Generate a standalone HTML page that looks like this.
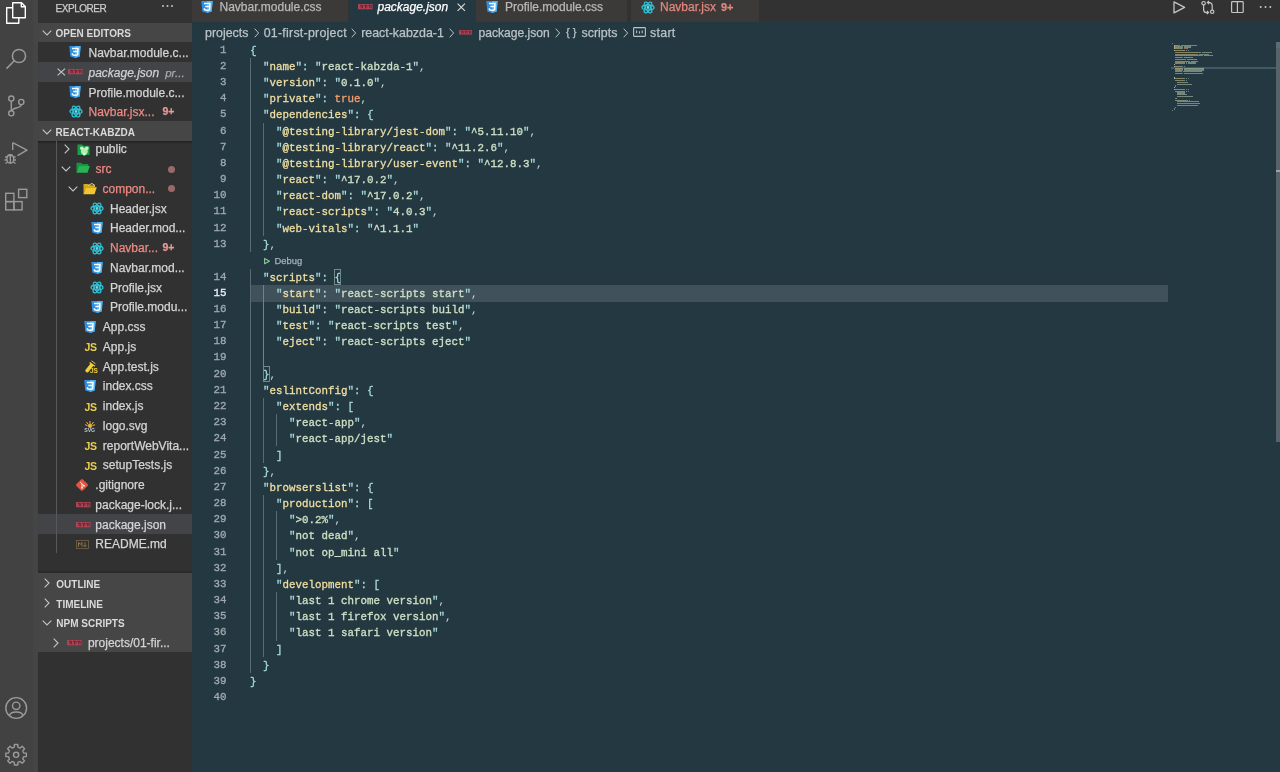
<!DOCTYPE html><html><head><meta charset="utf-8"><style>
*{box-sizing:border-box;margin:0;padding:0}
html,body{width:1280px;height:772px;overflow:hidden;background:#243842;font-family:"Liberation Sans",sans-serif}
div,span.a,svg{position:absolute}
svg{overflow:visible}
.t{white-space:pre;font-size:12px;line-height:14px;color:#d4d4d4;-webkit-text-stroke:0.25px currentColor}
.h{white-space:pre;font-size:10px;font-weight:bold;line-height:12px;color:#dadada}
.red{color:#ec8a84}
.ln{width:40px;text-align:right;left:186.5px;font-family:"Liberation Mono",monospace;font-size:10.833px;color:#a0aaae;line-height:16.18px;white-space:pre;-webkit-text-stroke:0.3px currentColor;transform:scaleY(1.08)}
.l{left:250px;line-height:16.18px;font-family:"Liberation Mono",monospace;font-size:10.833px;white-space:pre;color:#cfd8dc;transform:translateY(0.4px) scaleY(1.07)}
.l span{-webkit-text-stroke:0.3px currentColor}
.k{color:#efdea2}
.q{color:#a6d9dc}
.s{color:#cde0c4}
.b{color:#f4a06d}
.g{width:1px;background:#3d4e57}
</style></head><body><div id="root" style="left:0;top:0;width:1280px;height:772px;overflow:hidden;will-change:transform">
<div style="left:0px;top:0px;width:33px;height:772px;background:#424242;"></div>
<div style="left:32.8px;top:0px;width:4.8px;height:772px;background:#454545;"></div>
<div style="left:37.6px;top:0px;width:1px;height:772px;background:#2f2f2f;"></div>
<div style="left:38px;top:0px;width:153.5px;height:772px;background:#313131;"></div>
<div style="left:38px;top:0px;width:153.5px;height:22.3px;background:#333333;"></div>
<div style="left:191.5px;top:0px;width:1088.5px;height:22px;background:#323232;"></div>
<svg style="left:0px;top:0px" width="36" height="30" viewBox="0 0 36 30"><g fill="none" stroke="#ffffff" stroke-width="1.4" stroke-linejoin="round">
<path d="M12.7 2.7 H21.5 L25.3 6.5 V17.8 H12.7 Z"/><path d="M21.3 2.7 V6.7 H25.3"/>
<path d="M12.7 7.8 H6.7 V23.3 H18.8 V17.8"/></g></svg>
<svg style="left:0px;top:40px" width="36" height="32" viewBox="0 0 36 32"><g fill="none" stroke="#9a9a9a" stroke-width="1.5"><circle cx="19" cy="16" r="6.6"/><path d="M14.3 20.7 L6.5 28.6"/></g></svg>
<svg style="left:0px;top:90px" width="36" height="30" viewBox="0 0 36 30"><g fill="none" stroke="#9a9a9a" stroke-width="1.4"><circle cx="11.3" cy="8.6" r="2.6"/><circle cx="11.3" cy="23.3" r="2.6"/><circle cx="21.3" cy="12" r="2.6"/><path d="M11.3 11.2 V20.7"/><path d="M21.3 14.6 C21.3 19 12.5 17 11.8 20.8"/></g></svg>
<svg style="left:0px;top:138px" width="36" height="30" viewBox="0 0 36 30"><g fill="none" stroke="#9a9a9a" stroke-width="1.4" stroke-linejoin="round"><path d="M12.7 4.7 L27 12.2 L17.5 17.7"/><path d="M12.7 4.7 V12"/>
<ellipse cx="10.3" cy="21" rx="3.4" ry="4.2"/><path d="M7.5 17.5 H13 M5 19 H7 M13.6 19 H15.6 M4.5 22 H7 M13.6 22 H16 M5.5 25.5 L7.5 24 M15.5 25.5 L13.3 24 M10.3 17 V25"/></g></svg>
<svg style="left:0px;top:185px" width="36" height="30" viewBox="0 0 36 30"><g fill="none" stroke="#9a9a9a" stroke-width="1.4"><rect x="5.7" y="8.3" width="8.2" height="8.3"/><rect x="5.7" y="16.6" width="8.2" height="8.3"/><rect x="13.9" y="16.6" width="8.2" height="8.3"/><rect x="18.6" y="4.3" width="8.2" height="8.3"/></g></svg>
<svg style="left:0px;top:694px" width="36" height="28" viewBox="0 0 36 28"><g fill="none" stroke="#9a9a9a" stroke-width="1.4"><circle cx="16.2" cy="14" r="10.4"/><circle cx="16.2" cy="11.8" r="3.7"/><path d="M9.4 21.8 C10.5 16.8 21.9 16.8 23 21.8"/></g></svg>
<svg style="left:0px;top:740px" width="36" height="30" viewBox="0 0 36 30"><g fill="none" stroke="#9a9a9a" stroke-width="1.4" stroke-linejoin="round"><polygon points="13.29,7.63 14.26,7.12 14.39,4.54 17.81,4.54 17.94,7.12 18.91,7.63 19.19,7.75 20.23,8.06 22.15,6.34 24.56,8.75 22.84,10.67 23.15,11.71 23.27,11.99 23.78,12.96 26.36,13.09 26.36,16.51 23.78,16.64 23.27,17.61 23.15,17.89 22.84,18.93 24.56,20.85 22.15,23.26 20.23,21.54 19.19,21.85 18.91,21.97 17.94,22.48 17.81,25.06 14.39,25.06 14.26,22.48 13.29,21.97 13.01,21.85 11.97,21.54 10.05,23.26 7.64,20.85 9.36,18.93 9.05,17.89 8.93,17.61 8.42,16.64 5.84,16.51 5.84,13.09 8.42,12.96 8.93,11.99 9.05,11.71 9.36,10.67 7.64,8.75 10.05,6.34 11.97,8.06 13.01,7.75"/><circle cx="16.1" cy="14.8" r="2.6"/></g></svg>
<div class="t" style="left:55.5px;top:1.60px;font-size:10px;color:#cccccc;letter-spacing:-0.45px">EXPLORER</div>
<svg style="left:161px;top:3px" width="14" height="6" viewBox="0 0 14 6"><g fill="#c5c5c5"><circle cx="2" cy="3" r="1"/><circle cx="6.5" cy="3" r="1"/><circle cx="11" cy="3" r="1"/></g></svg>
<div style="left:38px;top:22.5px;width:153.5px;height:19.8px;background:#464646;"></div>
<svg style="left:42px;top:29.7px" width="10" height="6" viewBox="0 0 10 6"><path d="M0.7 0.7 L5 5 L9.3 0.7" fill="none" stroke="#c5c5c5" stroke-width="1.1"/></svg>
<div class="h" style="left:55.5px;top:27.80px;">OPEN EDITORS</div>
<div style="left:38px;top:62.25px;width:153.5px;height:20px;background:#434448;"></div>
<svg style="left:69.2px;top:45.900000000000006px" width="12" height="12" viewBox="0 0 12 12"><path d="M0.3 0 H11.7 L10.7 10.4 L6 12 L1.3 10.4 Z" fill="#2e8ee0"/><path d="M6 0 H11.7 L10.7 10.4 L6 12 Z" fill="#4db2f2"/><path d="M3 2.6 H9 L8.6 8.6 L6 9.5 L3.5 8.7 L3.4 7.3 M4.3 5.6 H8.8" fill="none" stroke="#ffffff" stroke-width="1.5"/></svg>
<div class="t" style="left:88.5px;top:46.40px;">Navbar.module.c...</div>
<svg style="left:56.5px;top:68px" width="9" height="8" viewBox="0 0 9 8"><path d="M0.6 0.6 L8 7.4 M8 0.6 L0.6 7.4" stroke="#c5c5c5" stroke-width="1.1"/></svg>
<svg style="left:67.8px;top:69px" width="14.5" height="5.3" viewBox="0 0 14.5 5.3"><rect x="0" y="0" width="14.5" height="5.3" fill="#a84656"/><g transform="scale(1.000 1.000)"><path d="M1.8 1.3 H4.6 V4.2 M3.2 1.6 V4.2 M6 1.3 H9 V3.6 M7.5 1.6 V4.6 M10.2 1.3 H13.2 V4.2 M11.7 1.6 V4.2" fill="none" stroke="#73202f" stroke-width="1"/></g></svg>
<div class="t" style="left:88.5px;top:66.20px;font-style:italic;color:#d0d0d0">package.json</div>
<div class="t" style="left:165.2px;top:65.70px;font-style:italic;font-size:11.5px;color:#a8a8a8">pr...</div>
<svg style="left:69.2px;top:85.7px" width="12" height="12" viewBox="0 0 12 12"><path d="M0.3 0 H11.7 L10.7 10.4 L6 12 L1.3 10.4 Z" fill="#2e8ee0"/><path d="M6 0 H11.7 L10.7 10.4 L6 12 Z" fill="#4db2f2"/><path d="M3 2.6 H9 L8.6 8.6 L6 9.5 L3.5 8.7 L3.4 7.3 M4.3 5.6 H8.8" fill="none" stroke="#ffffff" stroke-width="1.5"/></svg>
<div class="t" style="left:88.5px;top:86.00px;">Profile.module.c...</div>
<svg style="left:68.8px;top:104.8px" width="14" height="13" viewBox="0 0 14 13"><g fill="none" stroke="#2fc3d8" stroke-width="1.3"><ellipse cx="7" cy="6.5" rx="6" ry="2.5"/><ellipse cx="7" cy="6.5" rx="6" ry="2.5" transform="rotate(60 7 6.5)"/><ellipse cx="7" cy="6.5" rx="6" ry="2.5" transform="rotate(120 7 6.5)"/></g><circle cx="7" cy="6.5" r="1.4" fill="#5fe0ee"/></svg>
<div class="t red" style="left:88.5px;top:105.30px;">Navbar.jsx...</div>
<div class="t red" style="left:162.4px;top:104.30px;font-weight:bold;font-size:10.5px;color:#e89a96">9+</div>
<div style="left:38px;top:121.2px;width:153.5px;height:19.8px;background:#464646;"></div>
<div style="left:38px;top:141px;width:153.5px;height:3px;background:#313131;background:linear-gradient(#1f1f1f,#313131)"></div>
<svg style="left:42px;top:128.5px" width="10" height="6" viewBox="0 0 10 6"><path d="M0.7 0.7 L5 5 L9.3 0.7" fill="none" stroke="#c5c5c5" stroke-width="1.1"/></svg>
<div class="h" style="left:55.5px;top:126.80px;">REACT-KABZDA</div>
<div style="left:38px;top:514.2px;width:153.5px;height:19.7px;background:#434448;"></div>
<div style="left:55.8px;top:141px;width:1.3px;height:412px;background:#585858;"></div>
<svg style="left:63.6px;top:144.4px" width="6" height="10" viewBox="0 0 6 10"><path d="M0.7 0.7 L5 5 L0.7 9.3" fill="none" stroke="#c5c5c5" stroke-width="1.1"/></svg>
<svg style="left:77px;top:143.8px" width="13" height="11.5" viewBox="0 0 13 11.5"><path d="M0.5 0.5 H5 L6.3 1.8 H12.5 V11 H0.5 Z" fill="#17a048"/><circle cx="7.3" cy="7.2" r="3.4" fill="#b5eab0"/><circle cx="4.8" cy="4.2" r="1.8" fill="#c9f2c4"/><circle cx="9.8" cy="4.2" r="1.8" fill="#c9f2c4"/><circle cx="7.3" cy="10" r="1.6" fill="#d8f6d4"/></svg>
<div class="t" style="left:95.5px;top:141.80px;">public</div>
<svg style="left:61px;top:165.55px" width="10" height="6" viewBox="0 0 10 6"><path d="M0.7 0.7 L5 5 L9.3 0.7" fill="none" stroke="#c5c5c5" stroke-width="1.1"/></svg>
<svg style="left:75.5px;top:162.15px" width="14" height="11" viewBox="0 0 14 11"><path d="M0.5 0.8 H5 L6.3 2.1 H12.3 V4 H3 L0.5 10.5 Z" fill="#169343"/><path d="M2.8 4 H13.8 L11.5 10.8 H0.5 Z" fill="#27b553"/></svg>
<div class="t red" style="left:95.5px;top:162.15px;">src</div>
<div style="left:168.1px;top:165.55px;width:7.2px;height:7.2px;border-radius:50%;background:#9a6a6a"></div>
<svg style="left:68px;top:186.1px" width="10" height="6" viewBox="0 0 10 6"><path d="M0.7 0.7 L5 5 L9.3 0.7" fill="none" stroke="#c5c5c5" stroke-width="1.1"/></svg>
<svg style="left:83px;top:183.3px" width="14" height="11.5" viewBox="0 0 14 11.5"><path d="M0.5 1 H5 L6.3 2.3 H12 V4.3 H3 L0.5 11 Z" fill="#d9a91d"/><path d="M2.8 4.3 H13.8 L11.5 11.2 H0.5 Z" fill="#f2c531"/><path d="M5 2.5 L9 0.5 L12 2.5" fill="none" stroke="#f7e08a" stroke-width="0.9"/></svg>
<div class="t red" style="left:102.5px;top:181.90px;">compon...</div>
<div style="left:168.1px;top:185.3px;width:7.2px;height:7.2px;border-radius:50%;background:#9a6a6a"></div>
<svg style="left:90px;top:202.25px" width="14" height="13" viewBox="0 0 14 13"><g fill="none" stroke="#2fc3d8" stroke-width="1.3"><ellipse cx="7" cy="6.5" rx="6" ry="2.5"/><ellipse cx="7" cy="6.5" rx="6" ry="2.5" transform="rotate(60 7 6.5)"/><ellipse cx="7" cy="6.5" rx="6" ry="2.5" transform="rotate(120 7 6.5)"/></g><circle cx="7" cy="6.5" r="1.4" fill="#5fe0ee"/></svg>
<div class="t" style="left:110px;top:201.65px;">Header.jsx</div>
<svg style="left:91px;top:222.0px" width="12" height="12" viewBox="0 0 12 12"><path d="M0.3 0 H11.7 L10.7 10.4 L6 12 L1.3 10.4 Z" fill="#2e8ee0"/><path d="M6 0 H11.7 L10.7 10.4 L6 12 Z" fill="#4db2f2"/><path d="M3 2.6 H9 L8.6 8.6 L6 9.5 L3.5 8.7 L3.4 7.3 M4.3 5.6 H8.8" fill="none" stroke="#ffffff" stroke-width="1.5"/></svg>
<div class="t" style="left:110px;top:221.40px;">Header.mod...</div>
<svg style="left:90px;top:241.75px" width="14" height="13" viewBox="0 0 14 13"><g fill="none" stroke="#2fc3d8" stroke-width="1.3"><ellipse cx="7" cy="6.5" rx="6" ry="2.5"/><ellipse cx="7" cy="6.5" rx="6" ry="2.5" transform="rotate(60 7 6.5)"/><ellipse cx="7" cy="6.5" rx="6" ry="2.5" transform="rotate(120 7 6.5)"/></g><circle cx="7" cy="6.5" r="1.4" fill="#5fe0ee"/></svg>
<div class="t red" style="left:110px;top:241.15px;">Navbar...</div>
<div class="t red" style="left:162.4px;top:240.45px;font-weight:bold;font-size:10.5px;color:#e89a96">9+</div>
<svg style="left:91px;top:261.49999999999994px" width="12" height="12" viewBox="0 0 12 12"><path d="M0.3 0 H11.7 L10.7 10.4 L6 12 L1.3 10.4 Z" fill="#2e8ee0"/><path d="M6 0 H11.7 L10.7 10.4 L6 12 Z" fill="#4db2f2"/><path d="M3 2.6 H9 L8.6 8.6 L6 9.5 L3.5 8.7 L3.4 7.3 M4.3 5.6 H8.8" fill="none" stroke="#ffffff" stroke-width="1.5"/></svg>
<div class="t" style="left:110px;top:260.90px;">Navbar.mod...</div>
<svg style="left:90px;top:281.25px" width="14" height="13" viewBox="0 0 14 13"><g fill="none" stroke="#2fc3d8" stroke-width="1.3"><ellipse cx="7" cy="6.5" rx="6" ry="2.5"/><ellipse cx="7" cy="6.5" rx="6" ry="2.5" transform="rotate(60 7 6.5)"/><ellipse cx="7" cy="6.5" rx="6" ry="2.5" transform="rotate(120 7 6.5)"/></g><circle cx="7" cy="6.5" r="1.4" fill="#5fe0ee"/></svg>
<div class="t" style="left:110px;top:280.65px;">Profile.jsx</div>
<svg style="left:91px;top:300.99999999999994px" width="12" height="12" viewBox="0 0 12 12"><path d="M0.3 0 H11.7 L10.7 10.4 L6 12 L1.3 10.4 Z" fill="#2e8ee0"/><path d="M6 0 H11.7 L10.7 10.4 L6 12 Z" fill="#4db2f2"/><path d="M3 2.6 H9 L8.6 8.6 L6 9.5 L3.5 8.7 L3.4 7.3 M4.3 5.6 H8.8" fill="none" stroke="#ffffff" stroke-width="1.5"/></svg>
<div class="t" style="left:110px;top:300.40px;">Profile.modu...</div>
<svg style="left:84.2px;top:320.74999999999994px" width="12" height="12" viewBox="0 0 12 12"><path d="M0.3 0 H11.7 L10.7 10.4 L6 12 L1.3 10.4 Z" fill="#2e8ee0"/><path d="M6 0 H11.7 L10.7 10.4 L6 12 Z" fill="#4db2f2"/><path d="M3 2.6 H9 L8.6 8.6 L6 9.5 L3.5 8.7 L3.4 7.3 M4.3 5.6 H8.8" fill="none" stroke="#ffffff" stroke-width="1.5"/></svg>
<div class="t" style="left:102.8px;top:320.15px;">App.css</div>
<div style="left:84.4px;top:342.29999999999995px;font:bold 10.5px/10px 'Liberation Sans',sans-serif;color:#e9cf4a;letter-spacing:-0.3px">JS</div>
<div class="t" style="left:102.8px;top:339.90px;">App.js</div>
<svg style="left:83.5px;top:360.15px" width="13" height="13" viewBox="0 0 13 13"><path d="M1.2 10.2 L6.8 3.2 L9.6 5.4 L4.2 12.2 Q1.8 13 1.2 10.2 Z" fill="#f0cf3a"/><path d="M5.6 2.4 L10.8 6.2" stroke="#f0cf3a" stroke-width="1.3"/><path d="M7.5 0.8 L11.5 3.8" stroke="#f0cf3a" stroke-width="0.9"/><text x="6" y="12.8" font-family="Liberation Sans" font-weight="bold" font-size="6.5" fill="#f0cf3a">JS</text></svg>
<div class="t" style="left:102.8px;top:359.65px;">App.test.js</div>
<svg style="left:84.2px;top:379.99999999999994px" width="12" height="12" viewBox="0 0 12 12"><path d="M0.3 0 H11.7 L10.7 10.4 L6 12 L1.3 10.4 Z" fill="#2e8ee0"/><path d="M6 0 H11.7 L10.7 10.4 L6 12 Z" fill="#4db2f2"/><path d="M3 2.6 H9 L8.6 8.6 L6 9.5 L3.5 8.7 L3.4 7.3 M4.3 5.6 H8.8" fill="none" stroke="#ffffff" stroke-width="1.5"/></svg>
<div class="t" style="left:102.8px;top:379.40px;">index.css</div>
<div style="left:84.4px;top:401.54999999999995px;font:bold 10.5px/10px 'Liberation Sans',sans-serif;color:#e9cf4a;letter-spacing:-0.3px">JS</div>
<div class="t" style="left:102.8px;top:399.15px;">index.js</div>
<svg style="left:84px;top:419.9px" width="12" height="12" viewBox="0 0 12 12"><g stroke="#f0b33a" stroke-width="1"><path d="M6 1 V5 M2.5 2 L4.5 4.8 M9.5 2 L7.5 4.8 M1 4.6 L3.6 5.8 M11 4.6 L8.4 5.8"/></g><circle cx="6" cy="6" r="2" fill="#f0b33a"/><text x="0.2" y="11.8" font-family="Liberation Sans" font-weight="bold" font-size="5.2" fill="#b9c6d8">SVG</text></svg>
<div class="t" style="left:102.8px;top:418.90px;">logo.svg</div>
<div style="left:84.4px;top:441.04999999999995px;font:bold 10.5px/10px 'Liberation Sans',sans-serif;color:#e9cf4a;letter-spacing:-0.3px">JS</div>
<div class="t" style="left:102.8px;top:438.65px;">reportWebVita...</div>
<div style="left:84.4px;top:460.79999999999995px;font:bold 10.5px/10px 'Liberation Sans',sans-serif;color:#e9cf4a;letter-spacing:-0.3px">JS</div>
<div class="t" style="left:102.8px;top:458.40px;">setupTests.js</div>
<svg style="left:75.4px;top:478.15px" width="14" height="14" viewBox="0 0 14 14"><rect x="2.4" y="2.4" width="9.2" height="9.2" rx="1.3" transform="rotate(45 7 7)" fill="#e2543e"/><path d="M5.2 4 L8.8 7.6 M7 5.8 V9.8" stroke="#fde3dc" stroke-width="1"/><circle cx="7" cy="9.8" r="1" fill="#fde3dc"/><circle cx="9" cy="7.8" r="1" fill="#fde3dc"/></svg>
<div class="t" style="left:95.3px;top:478.15px;">.gitignore</div>
<svg style="left:75.8px;top:502.29999999999995px" width="14.5" height="5.3" viewBox="0 0 14.5 5.3"><rect x="0" y="0" width="14.5" height="5.3" fill="#a84656"/><g transform="scale(1.000 1.000)"><path d="M1.8 1.3 H4.6 V4.2 M3.2 1.6 V4.2 M6 1.3 H9 V3.6 M7.5 1.6 V4.6 M10.2 1.3 H13.2 V4.2 M11.7 1.6 V4.2" fill="none" stroke="#73202f" stroke-width="1"/></g></svg>
<div class="t" style="left:95.3px;top:497.90px;">package-lock.j...</div>
<svg style="left:75.8px;top:522.05px" width="14.5" height="5.3" viewBox="0 0 14.5 5.3"><rect x="0" y="0" width="14.5" height="5.3" fill="#a84656"/><g transform="scale(1.000 1.000)"><path d="M1.8 1.3 H4.6 V4.2 M3.2 1.6 V4.2 M6 1.3 H9 V3.6 M7.5 1.6 V4.6 M10.2 1.3 H13.2 V4.2 M11.7 1.6 V4.2" fill="none" stroke="#73202f" stroke-width="1"/></g></svg>
<div class="t" style="left:95.3px;top:517.65px;">package.json</div>
<svg style="left:76px;top:539.9px" width="13" height="9" viewBox="0 0 13 9"><rect x="0.5" y="0.5" width="12" height="8" fill="none" stroke="#6f5f48" stroke-width="0.9"/><path d="M2.5 6.8 V2.3 L4.3 4.5 L6 2.3 V6.8 M9 2.3 V6.5 M7.6 5.2 L9 6.8 L10.4 5.2" fill="none" stroke="#8f7a5a" stroke-width="0.9"/></svg>
<div class="t" style="left:95.3px;top:537.40px;">README.md</div>
<div style="left:38px;top:571px;width:153.5px;height:1.8px;background:#2a2a2a;"></div>
<div style="left:38px;top:572.8px;width:153.5px;height:79.1px;background:#464646;"></div>
<svg style="left:44.2px;top:578.4px" width="6" height="10" viewBox="0 0 6 10"><path d="M0.7 0.7 L5 5 L0.7 9.3" fill="none" stroke="#c5c5c5" stroke-width="1.1"/></svg>
<div class="h" style="left:56.3px;top:578.90px;">OUTLINE</div>
<svg style="left:44.2px;top:598.1px" width="6" height="10" viewBox="0 0 6 10"><path d="M0.7 0.7 L5 5 L0.7 9.3" fill="none" stroke="#c5c5c5" stroke-width="1.1"/></svg>
<div class="h" style="left:56.3px;top:598.50px;">TIMELINE</div>
<svg style="left:42.2px;top:619.8px" width="10" height="6" viewBox="0 0 10 6"><path d="M0.7 0.7 L5 5 L9.3 0.7" fill="none" stroke="#c5c5c5" stroke-width="1.1"/></svg>
<div class="h" style="left:56.3px;top:618.10px;">NPM SCRIPTS</div>
<svg style="left:53px;top:637.6px" width="6" height="10" viewBox="0 0 6 10"><path d="M0.7 0.7 L5 5 L0.7 9.3" fill="none" stroke="#c5c5c5" stroke-width="1.1"/></svg>
<svg style="left:67.2px;top:640px" width="14.5" height="5.3" viewBox="0 0 14.5 5.3"><rect x="0" y="0" width="14.5" height="5.3" fill="#a84656"/><g transform="scale(1.000 1.000)"><path d="M1.8 1.3 H4.6 V4.2 M3.2 1.6 V4.2 M6 1.3 H9 V3.6 M7.5 1.6 V4.6 M10.2 1.3 H13.2 V4.2 M11.7 1.6 V4.2" fill="none" stroke="#73202f" stroke-width="1"/></g></svg>
<div class="t" style="left:87.9px;top:635.60px;">projects/01-fir...</div>
<div style="left:191.5px;top:0px;width:156.0px;height:22px;background:#3b3a39;"></div>
<div style="left:348.7px;top:0px;width:126.30000000000001px;height:22px;background:#243842;"></div>
<div style="left:476px;top:0px;width:150.5px;height:22px;background:#3b3a39;"></div>
<div style="left:630.5px;top:0px;width:128.89999999999998px;height:22px;background:#3b3a39;"></div>
<svg style="left:200.6px;top:1.4px" width="12" height="12" viewBox="0 0 12 12"><path d="M0.3 0 H11.7 L10.7 10.4 L6 12 L1.3 10.4 Z" fill="#2e8ee0"/><path d="M6 0 H11.7 L10.7 10.4 L6 12 Z" fill="#4db2f2"/><path d="M3 2.6 H9 L8.6 8.6 L6 9.5 L3.5 8.7 L3.4 7.3 M4.3 5.6 H8.8" fill="none" stroke="#ffffff" stroke-width="1.5"/></svg>
<div class="t" style="left:219.5px;top:0.20px;color:#b8b8b8">Navbar.module.css</div>
<svg style="left:357.8px;top:4.2px" width="14.5" height="5.3" viewBox="0 0 14.5 5.3"><rect x="0" y="0" width="14.5" height="5.3" fill="#a84656"/><g transform="scale(1.000 1.000)"><path d="M1.8 1.3 H4.6 V4.2 M3.2 1.6 V4.2 M6 1.3 H9 V3.6 M7.5 1.6 V4.6 M10.2 1.3 H13.2 V4.2 M11.7 1.6 V4.2" fill="none" stroke="#73202f" stroke-width="1"/></g></svg>
<div class="t" style="left:377.5px;top:0.20px;font-style:italic;color:#ffffff">package.json</div>
<svg style="left:457px;top:3.3px" width="8.5" height="8.5" viewBox="0 0 8.5 8.5"><path d="M0.6 0.6 L7.9 7.9 M7.9 0.6 L0.6 7.9" stroke="#dddddd" stroke-width="1.1"/></svg>
<svg style="left:485.5px;top:1.4px" width="12" height="12" viewBox="0 0 12 12"><path d="M0.3 0 H11.7 L10.7 10.4 L6 12 L1.3 10.4 Z" fill="#2e8ee0"/><path d="M6 0 H11.7 L10.7 10.4 L6 12 Z" fill="#4db2f2"/><path d="M3 2.6 H9 L8.6 8.6 L6 9.5 L3.5 8.7 L3.4 7.3 M4.3 5.6 H8.8" fill="none" stroke="#ffffff" stroke-width="1.5"/></svg>
<div class="t" style="left:505px;top:0.20px;color:#b8b8b8">Profile.module.css</div>
<svg style="left:640.5px;top:1.0px" width="14" height="13" viewBox="0 0 14 13"><g fill="none" stroke="#2fc3d8" stroke-width="1.3"><ellipse cx="7" cy="6.5" rx="6" ry="2.5"/><ellipse cx="7" cy="6.5" rx="6" ry="2.5" transform="rotate(60 7 6.5)"/><ellipse cx="7" cy="6.5" rx="6" ry="2.5" transform="rotate(120 7 6.5)"/></g><circle cx="7" cy="6.5" r="1.4" fill="#5fe0ee"/></svg>
<div class="t" style="left:660px;top:0.20px;color:#e2867e">Navbar.jsx</div>
<div class="t" style="left:721px;top:0.20px;color:#e2867e;font-weight:bold;font-size:11px">9+</div>
<svg style="left:1170px;top:0px" width="20" height="16" viewBox="0 0 20 16"><path d="M4 1.9 L14.6 7.4 L4 12.9 Z" fill="none" stroke="#c5c5c5" stroke-width="1.3" stroke-linejoin="round"/></svg>
<svg style="left:1200px;top:0px" width="18" height="16" viewBox="0 0 18 16"><g fill="none" stroke="#c5c5c5" stroke-width="1.2"><circle cx="3.6" cy="3.2" r="1.7"/><circle cx="12.2" cy="11.8" r="1.7"/><path d="M3.6 4.9 V9.6 Q3.6 12.6 6.4 12.6 H8.4 M6.9 11 L8.5 12.6 L6.9 14.2"/><path d="M12.2 10.1 V5.6 Q12.2 2.6 9.4 2.6 H7.6 M9 1 L7.4 2.6 L9 4.2"/></g></svg>
<svg style="left:1229px;top:0px" width="17" height="16" viewBox="0 0 17 16"><g fill="none" stroke="#c5c5c5" stroke-width="1.2"><rect x="2.6" y="1.7" width="11.6" height="10.8" rx="0.8"/><path d="M8.4 1.7 V12.5"/></g></svg>
<svg style="left:1258px;top:4px" width="16" height="6" viewBox="0 0 16 6"><g fill="#c5c5c5"><circle cx="2.7" cy="3" r="1"/><circle cx="7.5" cy="3" r="1"/><circle cx="12.3" cy="3" r="1"/></g></svg>
<div class="t" style="left:205px;top:26.40px;color:#bcc3c6;font-size:12.4px">projects</div>
<svg style="left:253.5px;top:27.799999999999997px" width="6" height="10" viewBox="0 0 6 10"><path d="M0.7 0.7 L4.6 5 L0.7 9.3" fill="none" stroke="#bcc3c6" stroke-width="1"/></svg>
<div class="t" style="left:263.7px;top:26.40px;color:#bcc3c6;font-size:12.4px;letter-spacing:0.25px">01-first-project</div>
<svg style="left:350.8px;top:27.799999999999997px" width="6" height="10" viewBox="0 0 6 10"><path d="M0.7 0.7 L4.6 5 L0.7 9.3" fill="none" stroke="#bcc3c6" stroke-width="1"/></svg>
<div class="t" style="left:361.2px;top:26.40px;color:#bcc3c6;font-size:12.4px">react-kabzda-1</div>
<svg style="left:449px;top:27.799999999999997px" width="6" height="10" viewBox="0 0 6 10"><path d="M0.7 0.7 L4.6 5 L0.7 9.3" fill="none" stroke="#bcc3c6" stroke-width="1"/></svg>
<svg style="left:458.8px;top:29.8px" width="13" height="4.6" viewBox="0 0 13 4.6"><rect x="0" y="0" width="13" height="4.6" fill="#a84656"/><g transform="scale(0.897 0.868)"><path d="M1.8 1.3 H4.6 V4.2 M3.2 1.6 V4.2 M6 1.3 H9 V3.6 M7.5 1.6 V4.6 M10.2 1.3 H13.2 V4.2 M11.7 1.6 V4.2" fill="none" stroke="#73202f" stroke-width="1"/></g></svg>
<div class="t" style="left:478.5px;top:26.40px;color:#bcc3c6;font-size:12.1px">package.json</div>
<svg style="left:554.8px;top:27.799999999999997px" width="6" height="10" viewBox="0 0 6 10"><path d="M0.7 0.7 L4.6 5 L0.7 9.3" fill="none" stroke="#bcc3c6" stroke-width="1"/></svg>
<div class="t" style="left:566px;top:25.10px;color:#bcc3c6;font-size:11px">{ }</div>
<div class="t" style="left:581.6px;top:26.40px;color:#bcc3c6;font-size:12.4px">scripts</div>
<svg style="left:622.8px;top:27.799999999999997px" width="6" height="10" viewBox="0 0 6 10"><path d="M0.7 0.7 L4.6 5 L0.7 9.3" fill="none" stroke="#bcc3c6" stroke-width="1"/></svg>
<svg style="left:633.4px;top:27.4px" width="14" height="10" viewBox="0 0 14 10"><g fill="none" stroke="#bcc3c6" stroke-width="1.1"><rect x="0.6" y="0.6" width="11.8" height="8.8" rx="0.8"/></g><path d="M3.6 3.6 V6.2 M6.5 4.2 V6.6 M9.2 3.6 V6.2" stroke="#bcc3c6" stroke-width="1.1"/></svg>
<div class="t" style="left:650px;top:26.40px;color:#bcc3c6;font-size:12.4px;letter-spacing:0.3px">start</div>
<div style="left:250.6px;top:285.4px;width:917.6px;height:16.3px;background:#40515a;"></div>
<div style="left:250px;top:57.8px;width:1.2px;height:194.2px;background:#586b73;"></div>
<div style="left:250px;top:268.5px;width:1.2px;height:404.5px;background:#586b73;"></div>
<div style="left:263px;top:122.5px;width:1.2px;height:113.3px;background:#586b73;"></div>
<div style="left:263px;top:284.7px;width:1.2px;height:80.9px;background:#6f838a;"></div>
<div style="left:263px;top:398.0px;width:1.2px;height:64.7px;background:#586b73;"></div>
<div style="left:263px;top:495.0px;width:1.2px;height:161.8px;background:#586b73;"></div>
<div style="left:276px;top:414.1px;width:1.2px;height:32.4px;background:#586b73;"></div>
<div style="left:276px;top:511.2px;width:1.2px;height:48.5px;background:#586b73;"></div>
<div style="left:276px;top:592.1px;width:1.2px;height:48.5px;background:#586b73;"></div>
<div class="ln" style="top:41.61px;color:#a0aaae">1</div>
<div class="l" style="top:41.61px"><span class="q">{</span></div>
<div class="ln" style="top:57.79px;color:#a0aaae">2</div>
<div class="l" style="top:57.79px">  <span class="q">"</span><span class="k">name</span><span class="q">": </span><span class="q">"</span><span class="s">react-kabzda-1</span><span class="q">"</span>,</div>
<div class="ln" style="top:73.97px;color:#a0aaae">3</div>
<div class="l" style="top:73.97px">  <span class="q">"</span><span class="k">version</span><span class="q">": </span><span class="q">"</span><span class="s">0.1.0</span><span class="q">"</span>,</div>
<div class="ln" style="top:90.15px;color:#a0aaae">4</div>
<div class="l" style="top:90.15px">  <span class="q">"</span><span class="k">private</span><span class="q">": </span><span class="b">true</span>,</div>
<div class="ln" style="top:106.33px;color:#a0aaae">5</div>
<div class="l" style="top:106.33px">  <span class="q">"</span><span class="k">dependencies</span><span class="q">": </span><span class="q">{</span></div>
<div class="ln" style="top:122.51px;color:#a0aaae">6</div>
<div class="l" style="top:122.51px">    <span class="q">"</span><span class="k">@testing-library/jest-dom</span><span class="q">": </span><span class="q">"</span><span class="s">^5.11.10</span><span class="q">"</span>,</div>
<div class="ln" style="top:138.69px;color:#a0aaae">7</div>
<div class="l" style="top:138.69px">    <span class="q">"</span><span class="k">@testing-library/react</span><span class="q">": </span><span class="q">"</span><span class="s">^11.2.6</span><span class="q">"</span>,</div>
<div class="ln" style="top:154.87px;color:#a0aaae">8</div>
<div class="l" style="top:154.87px">    <span class="q">"</span><span class="k">@testing-library/user-event</span><span class="q">": </span><span class="q">"</span><span class="s">^12.8.3</span><span class="q">"</span>,</div>
<div class="ln" style="top:171.05px;color:#a0aaae">9</div>
<div class="l" style="top:171.05px">    <span class="q">"</span><span class="k">react</span><span class="q">": </span><span class="q">"</span><span class="s">^17.0.2</span><span class="q">"</span>,</div>
<div class="ln" style="top:187.23px;color:#a0aaae">10</div>
<div class="l" style="top:187.23px">    <span class="q">"</span><span class="k">react-dom</span><span class="q">": </span><span class="q">"</span><span class="s">^17.0.2</span><span class="q">"</span>,</div>
<div class="ln" style="top:203.41px;color:#a0aaae">11</div>
<div class="l" style="top:203.41px">    <span class="q">"</span><span class="k">react-scripts</span><span class="q">": </span><span class="q">"</span><span class="s">4.0.3</span><span class="q">"</span>,</div>
<div class="ln" style="top:219.59px;color:#a0aaae">12</div>
<div class="l" style="top:219.59px">    <span class="q">"</span><span class="k">web-vitals</span><span class="q">": </span><span class="q">"</span><span class="s">^1.1.1</span><span class="q">"</span></div>
<div class="ln" style="top:235.77px;color:#a0aaae">13</div>
<div class="l" style="top:235.77px">  <span class="q">}</span>,</div>
<div class="ln" style="top:268.53px;color:#a0aaae">14</div>
<div class="l" style="top:268.53px">  <span class="q">"</span><span class="k">scripts</span><span class="q">": </span><span class="q">{</span></div>
<div class="ln" style="top:284.71px;color:#eef1f2">15</div>
<div class="l" style="top:284.71px">    <span class="q">"</span><span class="k">start</span><span class="q">": </span><span class="q">"</span><span class="s">react-scripts start</span><span class="q">"</span>,</div>
<div class="ln" style="top:300.89px;color:#a0aaae">16</div>
<div class="l" style="top:300.89px">    <span class="q">"</span><span class="k">build</span><span class="q">": </span><span class="q">"</span><span class="s">react-scripts build</span><span class="q">"</span>,</div>
<div class="ln" style="top:317.07px;color:#a0aaae">17</div>
<div class="l" style="top:317.07px">    <span class="q">"</span><span class="k">test</span><span class="q">": </span><span class="q">"</span><span class="s">react-scripts test</span><span class="q">"</span>,</div>
<div class="ln" style="top:333.25px;color:#a0aaae">18</div>
<div class="l" style="top:333.25px">    <span class="q">"</span><span class="k">eject</span><span class="q">": </span><span class="q">"</span><span class="s">react-scripts eject</span><span class="q">"</span></div>
<div class="ln" style="top:349.43px;color:#a0aaae">19</div>
<div class="l" style="top:349.43px"></div>
<div class="ln" style="top:365.61px;color:#a0aaae">20</div>
<div class="l" style="top:365.61px">  <span class="q">}</span>,</div>
<div class="ln" style="top:381.79px;color:#a0aaae">21</div>
<div class="l" style="top:381.79px">  <span class="q">"</span><span class="k">eslintConfig</span><span class="q">": </span><span class="q">{</span></div>
<div class="ln" style="top:397.97px;color:#a0aaae">22</div>
<div class="l" style="top:397.97px">    <span class="q">"</span><span class="k">extends</span><span class="q">": </span><span class="q">[</span></div>
<div class="ln" style="top:414.15px;color:#a0aaae">23</div>
<div class="l" style="top:414.15px">      <span class="q">"</span><span class="s">react-app</span><span class="q">"</span>,</div>
<div class="ln" style="top:430.33px;color:#a0aaae">24</div>
<div class="l" style="top:430.33px">      <span class="q">"</span><span class="s">react-app/jest</span><span class="q">"</span></div>
<div class="ln" style="top:446.51px;color:#a0aaae">25</div>
<div class="l" style="top:446.51px">    <span class="q">]</span></div>
<div class="ln" style="top:462.69px;color:#a0aaae">26</div>
<div class="l" style="top:462.69px">  <span class="q">}</span>,</div>
<div class="ln" style="top:478.87px;color:#a0aaae">27</div>
<div class="l" style="top:478.87px">  <span class="q">"</span><span class="k">browserslist</span><span class="q">": </span><span class="q">{</span></div>
<div class="ln" style="top:495.05px;color:#a0aaae">28</div>
<div class="l" style="top:495.05px">    <span class="q">"</span><span class="k">production</span><span class="q">": </span><span class="q">[</span></div>
<div class="ln" style="top:511.23px;color:#a0aaae">29</div>
<div class="l" style="top:511.23px">      <span class="q">"</span><span class="s">&gt;0.2%</span><span class="q">"</span>,</div>
<div class="ln" style="top:527.41px;color:#a0aaae">30</div>
<div class="l" style="top:527.41px">      <span class="q">"</span><span class="s">not dead</span><span class="q">"</span>,</div>
<div class="ln" style="top:543.59px;color:#a0aaae">31</div>
<div class="l" style="top:543.59px">      <span class="q">"</span><span class="s">not op_mini all</span><span class="q">"</span></div>
<div class="ln" style="top:559.77px;color:#a0aaae">32</div>
<div class="l" style="top:559.77px">    <span class="q">]</span>,</div>
<div class="ln" style="top:575.95px;color:#a0aaae">33</div>
<div class="l" style="top:575.95px">    <span class="q">"</span><span class="k">development</span><span class="q">": </span><span class="q">[</span></div>
<div class="ln" style="top:592.13px;color:#a0aaae">34</div>
<div class="l" style="top:592.13px">      <span class="q">"</span><span class="s">last 1 chrome version</span><span class="q">"</span>,</div>
<div class="ln" style="top:608.31px;color:#a0aaae">35</div>
<div class="l" style="top:608.31px">      <span class="q">"</span><span class="s">last 1 firefox version</span><span class="q">"</span>,</div>
<div class="ln" style="top:624.49px;color:#a0aaae">36</div>
<div class="l" style="top:624.49px">      <span class="q">"</span><span class="s">last 1 safari version</span><span class="q">"</span></div>
<div class="ln" style="top:640.67px;color:#a0aaae">37</div>
<div class="l" style="top:640.67px">    <span class="q">]</span></div>
<div class="ln" style="top:656.85px;color:#a0aaae">38</div>
<div class="l" style="top:656.85px">  <span class="q">}</span></div>
<div class="ln" style="top:673.03px;color:#a0aaae">39</div>
<div class="l" style="top:673.03px"><span class="q">}</span></div>
<div class="ln" style="top:689.21px;color:#a0aaae">40</div>
<div class="l" style="top:689.21px"></div>
<div style="left:334.3px;top:269px;width:6.3px;height:15.5px;background:transparent;border:1px solid #6f8a8a"></div>
<div style="left:262.6px;top:366.2px;width:7.3px;height:15.5px;background:transparent;border:1px solid #6f8a8a"></div>
<svg style="left:264.4px;top:257.6px" width="6" height="6.4" viewBox="0 0 6 6.4"><path d="M0.6 0.6 L5.4 3.2 L0.6 5.8 Z" fill="none" stroke="#8cc9a2" stroke-width="1.1" stroke-linejoin="round"/></svg>
<div class="t" style="left:274.5px;top:254.20px;font-size:9.4px;color:#a5b2b6">Debug</div>
<div style="left:1168.5px;top:285.4px;width:0px;height:0px;background:transparent;"></div>
<div style="left:1275.7px;top:42px;width:4.3px;height:400px;background:#56636b;"></div>
<div style="left:1275.7px;top:42px;width:4.3px;height:6px;background:#5d6b74;"></div>
<div style="left:1275.7px;top:170.3px;width:4.3px;height:1.6px;background:#9aa6ab;"></div>
<div style="left:1170.7px;top:67.38000000000001px;width:105.0px;height:1.6px;background:#3f5a66;"></div>
<div style="left:1171.70px;top:42.90px;width:0.92px;height:1.2px;background:#9fd3d6;opacity:0.5"></div><div style="left:1173.54px;top:44.67px;width:0.92px;height:1.2px;background:#9fd3d6;opacity:0.5"></div><div style="left:1174.46px;top:44.67px;width:3.68px;height:1.2px;background:#e6cf8c;opacity:0.5"></div><div style="left:1178.14px;top:44.67px;width:1.84px;height:1.2px;background:#9fd3d6;opacity:0.5"></div><div style="left:1180.90px;top:44.67px;width:14.72px;height:1.2px;background:#c6d6ad;opacity:0.5"></div><div style="left:1195.62px;top:44.67px;width:0.92px;height:1.2px;background:#cfd8dc;opacity:0.5"></div><div style="left:1173.54px;top:46.44px;width:0.92px;height:1.2px;background:#9fd3d6;opacity:0.5"></div><div style="left:1174.46px;top:46.44px;width:6.44px;height:1.2px;background:#e6cf8c;opacity:0.5"></div><div style="left:1180.90px;top:46.44px;width:1.84px;height:1.2px;background:#9fd3d6;opacity:0.5"></div><div style="left:1183.66px;top:46.44px;width:6.44px;height:1.2px;background:#c6d6ad;opacity:0.5"></div><div style="left:1190.10px;top:46.44px;width:0.92px;height:1.2px;background:#cfd8dc;opacity:0.5"></div><div style="left:1173.54px;top:48.21px;width:0.92px;height:1.2px;background:#9fd3d6;opacity:0.5"></div><div style="left:1174.46px;top:48.21px;width:6.44px;height:1.2px;background:#e6cf8c;opacity:0.5"></div><div style="left:1180.90px;top:48.21px;width:1.84px;height:1.2px;background:#9fd3d6;opacity:0.5"></div><div style="left:1183.66px;top:48.21px;width:3.68px;height:1.2px;background:#f4a06d;opacity:0.5"></div><div style="left:1187.34px;top:48.21px;width:0.92px;height:1.2px;background:#cfd8dc;opacity:0.5"></div><div style="left:1173.54px;top:49.98px;width:0.92px;height:1.2px;background:#9fd3d6;opacity:0.5"></div><div style="left:1174.46px;top:49.98px;width:11.04px;height:1.2px;background:#e6cf8c;opacity:0.5"></div><div style="left:1185.50px;top:49.98px;width:1.84px;height:1.2px;background:#9fd3d6;opacity:0.5"></div><div style="left:1188.26px;top:49.98px;width:0.92px;height:1.2px;background:#9fd3d6;opacity:0.5"></div><div style="left:1175.38px;top:51.75px;width:0.92px;height:1.2px;background:#9fd3d6;opacity:0.5"></div><div style="left:1176.30px;top:51.75px;width:23.00px;height:1.2px;background:#e6cf8c;opacity:0.5"></div><div style="left:1199.30px;top:51.75px;width:1.84px;height:1.2px;background:#9fd3d6;opacity:0.5"></div><div style="left:1202.06px;top:51.75px;width:9.20px;height:1.2px;background:#c6d6ad;opacity:0.5"></div><div style="left:1211.26px;top:51.75px;width:0.92px;height:1.2px;background:#cfd8dc;opacity:0.5"></div><div style="left:1175.38px;top:53.52px;width:0.92px;height:1.2px;background:#9fd3d6;opacity:0.5"></div><div style="left:1176.30px;top:53.52px;width:20.24px;height:1.2px;background:#e6cf8c;opacity:0.5"></div><div style="left:1196.54px;top:53.52px;width:1.84px;height:1.2px;background:#9fd3d6;opacity:0.5"></div><div style="left:1199.30px;top:53.52px;width:8.28px;height:1.2px;background:#c6d6ad;opacity:0.5"></div><div style="left:1207.58px;top:53.52px;width:0.92px;height:1.2px;background:#cfd8dc;opacity:0.5"></div><div style="left:1175.38px;top:55.29px;width:0.92px;height:1.2px;background:#9fd3d6;opacity:0.5"></div><div style="left:1176.30px;top:55.29px;width:24.84px;height:1.2px;background:#e6cf8c;opacity:0.5"></div><div style="left:1201.14px;top:55.29px;width:1.84px;height:1.2px;background:#9fd3d6;opacity:0.5"></div><div style="left:1203.90px;top:55.29px;width:8.28px;height:1.2px;background:#c6d6ad;opacity:0.5"></div><div style="left:1212.18px;top:55.29px;width:0.92px;height:1.2px;background:#cfd8dc;opacity:0.5"></div><div style="left:1175.38px;top:57.06px;width:0.92px;height:1.2px;background:#9fd3d6;opacity:0.5"></div><div style="left:1176.30px;top:57.06px;width:4.60px;height:1.2px;background:#e6cf8c;opacity:0.5"></div><div style="left:1180.90px;top:57.06px;width:1.84px;height:1.2px;background:#9fd3d6;opacity:0.5"></div><div style="left:1183.66px;top:57.06px;width:8.28px;height:1.2px;background:#c6d6ad;opacity:0.5"></div><div style="left:1191.94px;top:57.06px;width:0.92px;height:1.2px;background:#cfd8dc;opacity:0.5"></div><div style="left:1175.38px;top:58.83px;width:0.92px;height:1.2px;background:#9fd3d6;opacity:0.5"></div><div style="left:1176.30px;top:58.83px;width:8.28px;height:1.2px;background:#e6cf8c;opacity:0.5"></div><div style="left:1184.58px;top:58.83px;width:1.84px;height:1.2px;background:#9fd3d6;opacity:0.5"></div><div style="left:1187.34px;top:58.83px;width:8.28px;height:1.2px;background:#c6d6ad;opacity:0.5"></div><div style="left:1195.62px;top:58.83px;width:0.92px;height:1.2px;background:#cfd8dc;opacity:0.5"></div><div style="left:1175.38px;top:60.60px;width:0.92px;height:1.2px;background:#9fd3d6;opacity:0.5"></div><div style="left:1176.30px;top:60.60px;width:11.96px;height:1.2px;background:#e6cf8c;opacity:0.5"></div><div style="left:1188.26px;top:60.60px;width:1.84px;height:1.2px;background:#9fd3d6;opacity:0.5"></div><div style="left:1191.02px;top:60.60px;width:6.44px;height:1.2px;background:#c6d6ad;opacity:0.5"></div><div style="left:1197.46px;top:60.60px;width:0.92px;height:1.2px;background:#cfd8dc;opacity:0.5"></div><div style="left:1175.38px;top:62.37px;width:0.92px;height:1.2px;background:#9fd3d6;opacity:0.5"></div><div style="left:1176.30px;top:62.37px;width:9.20px;height:1.2px;background:#e6cf8c;opacity:0.5"></div><div style="left:1185.50px;top:62.37px;width:1.84px;height:1.2px;background:#9fd3d6;opacity:0.5"></div><div style="left:1188.26px;top:62.37px;width:7.36px;height:1.2px;background:#c6d6ad;opacity:0.5"></div><div style="left:1173.54px;top:64.14px;width:0.92px;height:1.2px;background:#9fd3d6;opacity:0.5"></div><div style="left:1174.46px;top:64.14px;width:0.92px;height:1.2px;background:#cfd8dc;opacity:0.5"></div><div style="left:1173.54px;top:65.91px;width:0.92px;height:1.2px;background:#9fd3d6;opacity:0.5"></div><div style="left:1174.46px;top:65.91px;width:6.44px;height:1.2px;background:#e6cf8c;opacity:0.5"></div><div style="left:1180.90px;top:65.91px;width:1.84px;height:1.2px;background:#9fd3d6;opacity:0.5"></div><div style="left:1183.66px;top:65.91px;width:0.92px;height:1.2px;background:#9fd3d6;opacity:0.5"></div><div style="left:1175.38px;top:67.68px;width:0.92px;height:1.2px;background:#9fd3d6;opacity:0.5"></div><div style="left:1176.30px;top:67.68px;width:4.60px;height:1.2px;background:#e6cf8c;opacity:0.5"></div><div style="left:1180.90px;top:67.68px;width:1.84px;height:1.2px;background:#9fd3d6;opacity:0.5"></div><div style="left:1183.66px;top:67.68px;width:19.32px;height:1.2px;background:#c6d6ad;opacity:0.5"></div><div style="left:1202.98px;top:67.68px;width:0.92px;height:1.2px;background:#cfd8dc;opacity:0.5"></div><div style="left:1175.38px;top:69.45px;width:0.92px;height:1.2px;background:#9fd3d6;opacity:0.5"></div><div style="left:1176.30px;top:69.45px;width:4.60px;height:1.2px;background:#e6cf8c;opacity:0.5"></div><div style="left:1180.90px;top:69.45px;width:1.84px;height:1.2px;background:#9fd3d6;opacity:0.5"></div><div style="left:1183.66px;top:69.45px;width:19.32px;height:1.2px;background:#c6d6ad;opacity:0.5"></div><div style="left:1202.98px;top:69.45px;width:0.92px;height:1.2px;background:#cfd8dc;opacity:0.5"></div><div style="left:1175.38px;top:71.22px;width:0.92px;height:1.2px;background:#9fd3d6;opacity:0.5"></div><div style="left:1176.30px;top:71.22px;width:3.68px;height:1.2px;background:#e6cf8c;opacity:0.5"></div><div style="left:1179.98px;top:71.22px;width:1.84px;height:1.2px;background:#9fd3d6;opacity:0.5"></div><div style="left:1182.74px;top:71.22px;width:18.40px;height:1.2px;background:#c6d6ad;opacity:0.5"></div><div style="left:1201.14px;top:71.22px;width:0.92px;height:1.2px;background:#cfd8dc;opacity:0.5"></div><div style="left:1175.38px;top:72.99px;width:0.92px;height:1.2px;background:#9fd3d6;opacity:0.5"></div><div style="left:1176.30px;top:72.99px;width:4.60px;height:1.2px;background:#e6cf8c;opacity:0.5"></div><div style="left:1180.90px;top:72.99px;width:1.84px;height:1.2px;background:#9fd3d6;opacity:0.5"></div><div style="left:1183.66px;top:72.99px;width:19.32px;height:1.2px;background:#c6d6ad;opacity:0.5"></div><div style="left:1173.54px;top:76.53px;width:0.92px;height:1.2px;background:#9fd3d6;opacity:0.5"></div><div style="left:1174.46px;top:76.53px;width:0.92px;height:1.2px;background:#cfd8dc;opacity:0.5"></div><div style="left:1173.54px;top:78.30px;width:0.92px;height:1.2px;background:#9fd3d6;opacity:0.5"></div><div style="left:1174.46px;top:78.30px;width:11.04px;height:1.2px;background:#e6cf8c;opacity:0.5"></div><div style="left:1185.50px;top:78.30px;width:1.84px;height:1.2px;background:#9fd3d6;opacity:0.5"></div><div style="left:1188.26px;top:78.30px;width:0.92px;height:1.2px;background:#9fd3d6;opacity:0.5"></div><div style="left:1175.38px;top:80.07px;width:0.92px;height:1.2px;background:#9fd3d6;opacity:0.5"></div><div style="left:1176.30px;top:80.07px;width:6.44px;height:1.2px;background:#e6cf8c;opacity:0.5"></div><div style="left:1182.74px;top:80.07px;width:1.84px;height:1.2px;background:#9fd3d6;opacity:0.5"></div><div style="left:1185.50px;top:80.07px;width:0.92px;height:1.2px;background:#9fd3d6;opacity:0.5"></div><div style="left:1177.22px;top:81.84px;width:10.12px;height:1.2px;background:#c6d6ad;opacity:0.5"></div><div style="left:1187.34px;top:81.84px;width:0.92px;height:1.2px;background:#cfd8dc;opacity:0.5"></div><div style="left:1177.22px;top:83.61px;width:14.72px;height:1.2px;background:#c6d6ad;opacity:0.5"></div><div style="left:1175.38px;top:85.38px;width:0.92px;height:1.2px;background:#9fd3d6;opacity:0.5"></div><div style="left:1173.54px;top:87.15px;width:0.92px;height:1.2px;background:#9fd3d6;opacity:0.5"></div><div style="left:1174.46px;top:87.15px;width:0.92px;height:1.2px;background:#cfd8dc;opacity:0.5"></div><div style="left:1173.54px;top:88.92px;width:0.92px;height:1.2px;background:#9fd3d6;opacity:0.5"></div><div style="left:1174.46px;top:88.92px;width:11.04px;height:1.2px;background:#e6cf8c;opacity:0.5"></div><div style="left:1185.50px;top:88.92px;width:1.84px;height:1.2px;background:#9fd3d6;opacity:0.5"></div><div style="left:1188.26px;top:88.92px;width:0.92px;height:1.2px;background:#9fd3d6;opacity:0.5"></div><div style="left:1175.38px;top:90.69px;width:0.92px;height:1.2px;background:#9fd3d6;opacity:0.5"></div><div style="left:1176.30px;top:90.69px;width:9.20px;height:1.2px;background:#e6cf8c;opacity:0.5"></div><div style="left:1185.50px;top:90.69px;width:1.84px;height:1.2px;background:#9fd3d6;opacity:0.5"></div><div style="left:1188.26px;top:90.69px;width:0.92px;height:1.2px;background:#9fd3d6;opacity:0.5"></div><div style="left:1177.22px;top:92.46px;width:6.44px;height:1.2px;background:#c6d6ad;opacity:0.5"></div><div style="left:1183.66px;top:92.46px;width:0.92px;height:1.2px;background:#cfd8dc;opacity:0.5"></div><div style="left:1177.22px;top:94.23px;width:9.20px;height:1.2px;background:#c6d6ad;opacity:0.5"></div><div style="left:1186.42px;top:94.23px;width:0.92px;height:1.2px;background:#cfd8dc;opacity:0.5"></div><div style="left:1177.22px;top:96.00px;width:15.64px;height:1.2px;background:#c6d6ad;opacity:0.5"></div><div style="left:1175.38px;top:97.77px;width:0.92px;height:1.2px;background:#9fd3d6;opacity:0.5"></div><div style="left:1176.30px;top:97.77px;width:0.92px;height:1.2px;background:#cfd8dc;opacity:0.5"></div><div style="left:1175.38px;top:99.54px;width:0.92px;height:1.2px;background:#9fd3d6;opacity:0.5"></div><div style="left:1176.30px;top:99.54px;width:10.12px;height:1.2px;background:#e6cf8c;opacity:0.5"></div><div style="left:1186.42px;top:99.54px;width:1.84px;height:1.2px;background:#9fd3d6;opacity:0.5"></div><div style="left:1189.18px;top:99.54px;width:0.92px;height:1.2px;background:#9fd3d6;opacity:0.5"></div><div style="left:1177.22px;top:101.31px;width:21.16px;height:1.2px;background:#c6d6ad;opacity:0.5"></div><div style="left:1198.38px;top:101.31px;width:0.92px;height:1.2px;background:#cfd8dc;opacity:0.5"></div><div style="left:1177.22px;top:103.08px;width:22.08px;height:1.2px;background:#c6d6ad;opacity:0.5"></div><div style="left:1199.30px;top:103.08px;width:0.92px;height:1.2px;background:#cfd8dc;opacity:0.5"></div><div style="left:1177.22px;top:104.85px;width:21.16px;height:1.2px;background:#c6d6ad;opacity:0.5"></div><div style="left:1175.38px;top:106.62px;width:0.92px;height:1.2px;background:#9fd3d6;opacity:0.5"></div><div style="left:1173.54px;top:108.39px;width:0.92px;height:1.2px;background:#9fd3d6;opacity:0.5"></div><div style="left:1171.70px;top:110.16px;width:0.92px;height:1.2px;background:#9fd3d6;opacity:0.5"></div>
</div></body></html>
